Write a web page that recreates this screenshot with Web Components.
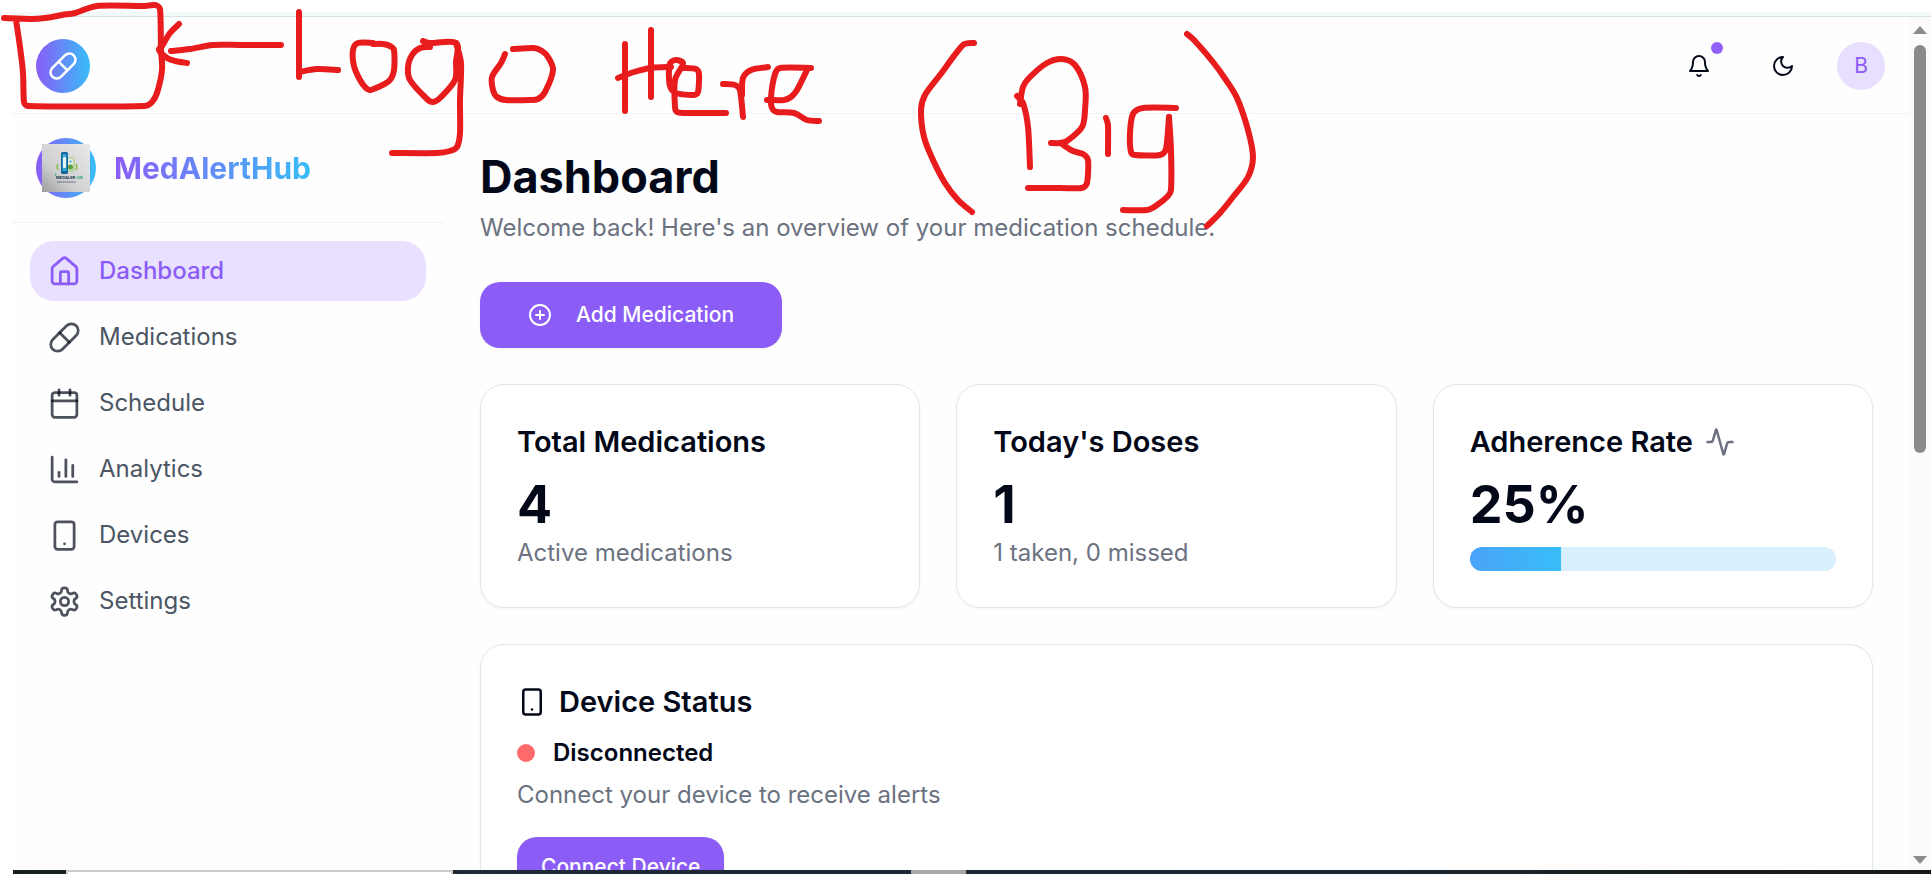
<!DOCTYPE html>
<html lang="en">
<head>
<meta charset="utf-8">
<meta name="viewport" content="width=device-width, initial-scale=1">
<title>MedAlertHub – Dashboard</title>
<style>
  html, body { margin: 0; height: 100%; }
  body {
    font-family: Inter, "Liberation Sans", sans-serif;
    font-size: 24px;
    line-height: 36px;
    color: #020817;
    background: #fff;
    overflow: hidden;
    --violet: #8b5cf6;
    --violet-soft: #e9e0ff;
    --sky: #38bdf8;
    --muted: #6b7280;
    --line: #e2e8f0;
    --hair: #f1f5f9;
    --page: #fefefe;
  }
</style>
</head>
<body>
<browser-window>
  <app-header slot="header"></app-header>
  <app-sidebar slot="side">
    <nav-item icon="home" href="#dashboard" active>Dashboard</nav-item>
    <nav-item icon="pill" href="#medications">Medications</nav-item>
    <nav-item icon="calendar" href="#schedule">Schedule</nav-item>
    <nav-item icon="chart" href="#analytics">Analytics</nav-item>
    <nav-item icon="phone" href="#devices">Devices</nav-item>
    <nav-item icon="settings" href="#settings">Settings</nav-item>
  </app-sidebar>
  <dashboard-page></dashboard-page>
</browser-window>
<ink-note></ink-note>

<script>
const ICONS = {
  home: '<path d="M15 21v-8a1 1 0 0 0-1-1h-4a1 1 0 0 0-1 1v8"/><path d="M3 10a2 2 0 0 1 .709-1.528l7-5.999a2 2 0 0 1 2.582 0l7 5.999A2 2 0 0 1 21 10v9a2 2 0 0 1-2 2H5a2 2 0 0 1-2-2z"/>',
  pill: '<path d="m10.5 20.5 10-10a4.95 4.95 0 1 0-7-7l-10 10a4.95 4.95 0 1 0 7 7Z"/><path d="m8.5 8.5 7 7"/>',
  calendar: '<path d="M8 2v4"/><path d="M16 2v4"/><rect width="18" height="18" x="3" y="4" rx="2"/><path d="M3 10h18"/>',
  chart: '<path d="M3 3v16a2 2 0 0 0 2 2h16"/><path d="M18 17V9"/><path d="M13 17V5"/><path d="M8 17v-3"/>',
  phone: '<rect width="14" height="20" x="5" y="2" rx="2" ry="2"/><path d="M12 18h.01"/>',
  settings: '<path d="M12.22 2h-.44a2 2 0 0 0-2 2v.18a2 2 0 0 1-1 1.73l-.43.25a2 2 0 0 1-2 0l-.15-.08a2 2 0 0 0-2.73.73l-.22.38a2 2 0 0 0 .73 2.73l.15.1a2 2 0 0 1 1 1.72v.51a2 2 0 0 1-1 1.74l-.15.09a2 2 0 0 0-.73 2.73l.22.38a2 2 0 0 0 2.73.73l.15-.08a2 2 0 0 1 2 0l.43.25a2 2 0 0 1 1 1.73V20a2 2 0 0 0 2 2h.44a2 2 0 0 0 2-2v-.18a2 2 0 0 1 1-1.73l.43-.25a2 2 0 0 1 2 0l.15.08a2 2 0 0 0 2.73-.73l.22-.39a2 2 0 0 0-.73-2.73l-.15-.08a2 2 0 0 1-1-1.74v-.5a2 2 0 0 1 1-1.74l.15-.09a2 2 0 0 0 .73-2.73l-.22-.38a2 2 0 0 0-2.73-.73l-.15.08a2 2 0 0 1-2 0l-.43-.25a2 2 0 0 1-1-1.73V4a2 2 0 0 0-2-2z"/><circle cx="12" cy="12" r="3"/>',
  bell: '<path d="M10.268 21a2 2 0 0 0 3.464 0"/><path d="M6 8a6 6 0 0 1 12 0c0 4.5 1.2 7 3 9H3c1.800-2 3-4.500 3-9"/>',
  moon: '<path d="M12 3a6 6 0 0 0 9 9 9 9 0 1 1-9-9Z"/>',
  plus: '<circle cx="12" cy="12" r="10"/><path d="M8 12h8"/><path d="M12 8v8"/>',
  activity: '<path d="M22 12h-2.480a2 2 0 0 0-1.930 1.460l-2.350 8.360a.25.25 0 0 1-.48 0L9.240 2.180a.25.25 0 0 0-.48 0l-2.350 8.360A2 2 0 0 1 4.490 12H2"/>'
};

/* Registers an element whose shadow root is built from a markup string or function. */
function define(name, markup, ready) {
  customElements.define(name, class extends HTMLElement {
    constructor() { super(); this.attachShadow({ mode: "open" }); }
    connectedCallback() {
      const t = document.createElement("template");
      t.innerHTML = typeof markup === "function" ? markup(this) : markup;
      this.shadowRoot.replaceChildren(t.content.cloneNode(true));
      if (ready) ready(this.shadowRoot, this);
    }
  });
}

define("ui-icon", el => {
  const s = el.getAttribute("size") || 24;
  return `<style>:host{display:block;flex:none;width:${s}px;height:${s}px}svg{display:block;width:100%;height:100%}</style>
  <svg viewBox="0 0 24 24" fill="none" stroke="currentColor" stroke-width="2" stroke-linecap="round" stroke-linejoin="round" aria-hidden="true">${ICONS[el.getAttribute("name")]}</svg>`;
});

define("browser-window", `
<style>
  :host{display:flex;flex-direction:column;height:100vh;overflow:hidden}
  .edge{flex:none;margin:12px 0 0 13px;height:4px;background:#f3f9f9;border-bottom:1px solid #d5e3e6}
  .view{flex:1;min-height:0;display:flex}
  .page{flex:1;min-width:0;margin-left:12px;padding-top:1px;background:var(--page);overflow:hidden}
  .cols{display:grid;grid-template-columns:432px 1fr}
</style>
<div class="edge"></div>
<div class="view">
  <div class="page">
    <slot name="header"></slot>
    <div class="cols"><slot name="side"></slot><slot></slot></div>
  </div>
  <scroll-rail></scroll-rail>
</div>
<task-strip></task-strip>`);

define("scroll-rail", `
<style>
  :host{display:flex;flex-direction:column;align-items:center;flex:none;width:22px;box-sizing:border-box;padding:9px 0 6px;background:#fbfbfb}
  svg{display:block;width:14px;height:8px;fill:#8b8b8b}
  .track{flex:1;width:12px;margin:11px 0}
  .thumb{height:51%;border-radius:6px;background:#8b8b8b}
</style>
<svg viewBox="0 0 14 8"><path d="M7 0 14 8H0z"/></svg>
<div class="track"><div class="thumb"></div></div>
<svg viewBox="0 0 14 8"><path d="M0 0H14L7 8z"/></svg>`);

define("task-strip", `
<style>
  :host{display:flex;flex:none;height:4px;margin-left:13px;background:linear-gradient(90deg,#171f20,#1f2937 24%,#1f2933 60%,#151a1a)}
  .start{width:53px}
  .search{box-sizing:border-box;width:387px;border:2px solid #ccc;border-bottom:0;background:#fff}
  .gap{width:458px}
  .task{width:55px;background:#a6a8ab}
</style>
<div class="start"></div><div class="search"></div><div class="gap"></div><div class="task"></div>`);

define("app-header", `
<style>
  :host{display:flex;align-items:center;box-sizing:border-box;height:96px;padding:0 24px;border-bottom:1px solid #f1f3f5}
  .logo{display:grid;place-items:center;width:54px;height:54px;border-radius:50%;color:#fff;background:linear-gradient(90deg,var(--violet),var(--sky))}
  .tools{display:flex;align-items:center;gap:24px;margin-left:auto}
  button{position:relative;display:grid;place-items:center;width:60px;height:60px;padding:0;border:0;background:none;color:inherit;font:inherit}
  .dot{position:absolute;top:6px;right:6px;width:12px;height:12px;border-radius:50%;background:#9061f9}
  .avatar{width:48px;height:48px;border-radius:50%;background:#e8defd;color:var(--violet);font-size:21px}
</style>
<a class="logo" href="#" aria-label="Home"><ui-icon name="pill" size="30"></ui-icon></a>
<div class="tools">
  <button aria-label="Notifications"><ui-icon name="bell"></ui-icon><span class="dot"></span></button>
  <button aria-label="Toggle theme"><ui-icon name="moon"></ui-icon></button>
  <button class="avatar">B</button>
</div>`);

define("app-sidebar", `
<style>
  :host{display:block}
  .brand{display:flex;align-items:center;gap:18px;height:108px;padding:0 24px;border-bottom:1px solid #f1f0f8}
  .mark{display:grid;place-items:center;width:60px;height:60px;border-radius:50%;background:linear-gradient(90deg,var(--violet),var(--sky))}
  .mark svg{display:block;width:48px;height:48px}
  .name{font-size:30px;font-weight:700;line-height:42px;color:transparent;background:linear-gradient(90deg,var(--violet),var(--sky));-webkit-background-clip:text;background-clip:text}
  nav{display:flex;flex-direction:column;gap:6px;padding:18px}
</style>
<div class="brand">
  <div class="mark">
    <svg viewBox="0 0 48 48" role="img" aria-label="MedAlert-Hub">
      <defs>
        <linearGradient id="g" x1="0" y1="1" x2="1" y2="0"><stop offset="0" stop-color="#9c9c9e"/><stop offset=".35" stop-color="#cfcfd1"/><stop offset="1" stop-color="#e9e9eb"/></linearGradient>
      </defs>
      <rect width="48" height="48" fill="url(#g)"/>
      <rect x="25" y="14" width="7" height="13" rx="1" fill="#dfe9df" stroke="#8cc152" stroke-width=".8"/>
      <circle cx="28.500" cy="23" r="2.600" fill="#5f9f3a"/><circle cx="28.500" cy="17.500" r="1" fill="#35a7d8"/>
      <rect x="19" y="8" width="7" height="22" rx="1.500" fill="#14679c"/>
      <rect x="20.500" y="10" width="4" height="17" fill="#35a9d6"/>
      <rect x="21" y="13" width="3" height="11" rx="1" fill="#e8f6fb"/>
      <path d="M16 20q-2 3 0 6M34 20q2 3 0 6" fill="none" stroke="#8cc152" stroke-width="1.500"/>
      <path d="M14 29q-2 2 1 4" fill="none" stroke="#3dbf9a" stroke-width="1"/>
      <text x="14" y="35" font-size="4" font-weight="700" fill="#1d3a4d">MEDALER<tspan fill="#29ab7b">-UB</tspan></text>
      <path d="M15 38h19" stroke="#59646c" stroke-width="1.200" stroke-dasharray="1.500 .4"/>
    </svg>
  </div>
  <div class="name">MedAlertHub</div>
</div>
<nav><slot></slot></nav>`);

define("nav-item", el => `
<style>
  :host{display:block}
  a{display:flex;align-items:center;gap:18px;box-sizing:border-box;height:60px;padding:0 18px;border-radius:24px;color:#4b5563;text-decoration:none}
  ui-icon{color:rgba(2,8,23,.7)}
  :host([active]) a{background:var(--violet-soft);color:var(--violet);font-weight:500}
  :host([active]) ui-icon{color:var(--violet)}
</style>
<a href="${el.getAttribute("href")}"><ui-icon name="${el.getAttribute("icon")}" size="33"></ui-icon><span><slot></slot></span></a>`);

define("ui-button", `
<style>
  :host{display:inline-block}
  button{display:flex;align-items:center;gap:24px;min-height:60px;padding:0 24px;border:0;border-radius:20px;background:var(--violet);color:#fff;font:500 21px/30px Inter,"Liberation Sans",sans-serif;box-shadow:0 1px 3px rgba(2,8,23,.06)}
  :host([large]) button{min-height:66px;padding:0 48px}
</style>
<button><slot name="icon"></slot><span><slot></slot></span></button>`);

define("ui-card", `
<style>
  :host{display:block;min-width:0;padding:36px;border:1px solid var(--line);border-radius:24px;background:#fff;box-shadow:0 1px 3px rgba(2,8,23,.05)}
  h2{display:flex;align-items:center;gap:12px;margin:0 0 12px;font-size:29px;font-weight:600;line-height:42px}
</style>
<h2><slot name="lead"></slot><slot name="title"></slot><slot name="trail"></slot></h2>
<slot></slot>`);

define("dashboard-page", `
<style>
  :host{display:block;min-width:0;padding:36px}
  h1{margin:0 0 6px;font-size:45px;font-weight:700;line-height:54px}
  p{margin:0;color:var(--muted)}
  .add{margin:36px 0}
  .add ui-button,.device ui-button{display:block;width:max-content}
  .stats{display:grid;grid-template-columns:repeat(3,1fr);gap:36px;margin-bottom:36px}
  .num{font-size:52px;font-weight:700;line-height:60px}
  .bar{height:24px;margin-top:12px;border-radius:12px;background:#d8f0fe;overflow:hidden}
  .bar div{width:25%;height:100%;background:linear-gradient(90deg,#4ba3f9,var(--sky))}
  .muted{color:var(--muted)}
  .state{display:flex;align-items:center;gap:18px;margin-bottom:6px;font-weight:600}
  .state::before{content:"";width:18px;height:18px;border-radius:50%;background:#ff6b6b}
  .device ui-button{margin-top:24px}
</style>
<main>
  <h1>Dashboard</h1>
  <p>Welcome back! Here's an overview of your medication schedule.</p>
  <div class="add"><ui-button large><ui-icon slot="icon" name="plus"></ui-icon>Add Medication</ui-button></div>
  <div class="stats">
    <ui-card><span slot="title">Total Medications</span><div class="num">4</div><p>Active medications</p></ui-card>
    <ui-card><span slot="title">Today's Doses</span><div class="num">1</div><p>1 taken, 0 missed</p></ui-card>
    <ui-card><span slot="title">Adherence Rate</span><ui-icon slot="trail" class="muted" name="activity" size="30"></ui-icon>
      <div class="num">25%</div>
      <div class="bar" role="progressbar" aria-label="Adherence rate" aria-valuenow="25" aria-valuemin="0" aria-valuemax="100"><div></div></div>
    </ui-card>
  </div>
  <ui-card class="device"><ui-icon slot="lead" name="phone" size="30"></ui-icon><span slot="title">Device Status</span>
    <div class="state">Disconnected</div>
    <p>Connect your device to receive alerts</p>
    <ui-button>Connect Device</ui-button>
  </ui-card>
</main>`);

/* Freehand red pen strokes, each a list of x y points joined by a smooth curve. */
const STROKES = [
  "4 18 32 19 45 18 62 15 75 13 97 6 143 6 155 5 160 9 161 50 162 70 157 93 152 102 145 106 28 106 24 102 23 73 20 47 16 20",
  "179 24 170 33 162 46 159 50 167 58 175 61 187 63",
  "171 51 190 49 213 45 240 45 281 45",
  "299 12 299 77", "299 72 317 69 338 70",
  "373 43 358 43 353 50 354 66 360 80 366 88 371 90 389 81 394 70 394 50 390 46 383 44 373 44",
  "430 47 420 48 412 55 408 67 410 80 427 99 433 102 440 98 455 80 456 62 456 43 430 43 423 41",
  "456 43 461 63 460 100 460 133 457 147 450 151 437 153 392 153",
  "505 54 501 63 492 77 493 90 497 97 506 100 530 100 538 99 545 92 553 70 548 57 542 51 534 48 513 49",
  "625 44 625 111", "651 30 651 97",
  "618 78 634 72 651 68 671 67",
  "684 68 696 69 699 74 698 92 694 95 676 93 670 86 669 68 671 62 677 60 683 64 675 80 675 107 677 112 684 113 726 113",
  "723 84 735 85 740 90 743 117", "742 95 743 78 751 70 768 67",
  "767 100 784 100 791 97 797 90 808 68", "811 68 780 68 775 74 771 97 772 108 777 112 794 113 807 120 819 121",
  "974 43 963 45 940 75 925 95 921 110 924 137 933 160 945 183 958 200 972 212",
  "1030 167 1028 127 1023 103 1017 96",
  "1020 104 1023 87 1030 77 1047 63 1062 59 1075 65 1085 87 1085 110 1082 127 1067 141 1060 143 1051 143",
  "1062 144 1073 151 1083 154 1088 160 1087 183 1082 188 1060 188 1028 188",
  "1106 118 1108 125 1108 154",
  "1176 108 1143 108 1133 114 1130 133 1131 152 1135 155 1160 155 1166 149 1169 117",
  "1169 117 1171 150 1171 190 1168 196 1157 205 1147 210 1123 210",
  "1187 34 1194 40 1213 62 1226 80 1237 98 1248 130 1253 157 1248 177 1233 197 1220 213 1207 226"
];
function curve(text) {
  const n = text.split(" ").map(Number), p = [];
  for (let i = 0; i < n.length; i += 2) p.push([n[i], n[i + 1]]);
  let d = "M" + p[0];
  for (let i = 0; i < p.length - 1; i++) {
    const a = p[i - 1] || p[i], b = p[i], c = p[i + 1], e = p[i + 2] || c;
    const len = Math.hypot(c[0] - b[0], c[1] - b[1]);
    const handle = (u, v, s) => {
      const l = Math.hypot(v[0] - u[0], v[1] - u[1]) || 1, k = s * Math.min(len / 3, l / 6);
      return [(v[0] - u[0]) / l * k, (v[1] - u[1]) / l * k];
    };
    const h1 = handle(a, c, 1), h2 = handle(b, e, -1);
    d += `C${b[0] + h1[0]} ${b[1] + h1[1]} ${c[0] + h2[0]} ${c[1] + h2[1]} ${c[0]} ${c[1]}`;
  }
  return d;
}
define("ink-note", () => `
<style>
  :host{position:absolute;top:0;left:0;pointer-events:none}
  svg{display:block}
</style>
<svg width="1260" height="240" fill="none" stroke="#e81c1c" stroke-width="6" stroke-linecap="round" stroke-linejoin="round" role="img" aria-label="Handwritten note">
${STROKES.map(s => `<path d="${curve(s)}"/>`).join("")}</svg>`);
</script>
</body>
</html>
